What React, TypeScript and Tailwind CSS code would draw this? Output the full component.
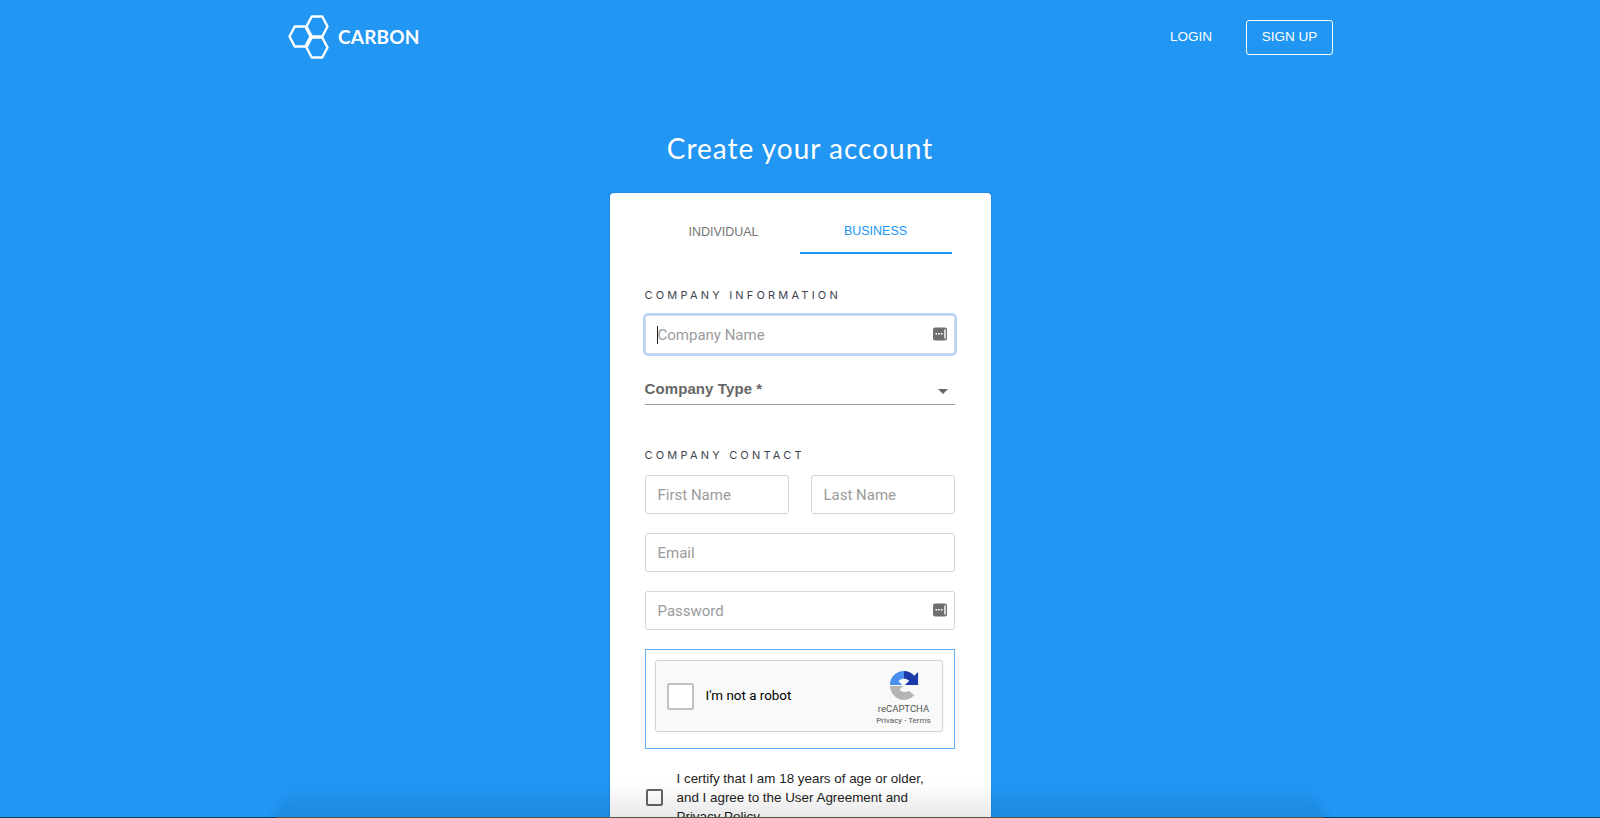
import React from "react";

function KeyIcon() {
  return (
    <svg width="14" height="14" viewBox="0 0 14 14" className="mb-[2px] shrink-0">
      <rect x="0" y="0.5" width="14" height="13" rx="2" fill="#6f6f6f" />
      <rect x="11" y="2.5" width="2" height="9" fill="#d8d8d8" />
      <rect x="2.5" y="6" width="1.6" height="1.6" fill="#fff" />
      <rect x="5.2" y="6" width="1.6" height="1.6" fill="#fff" />
      <rect x="7.9" y="6" width="1.6" height="1.6" fill="#fff" />
    </svg>
  );
}

function Field({ placeholder, keyIcon, className }: { placeholder: string; keyIcon?: boolean; className?: string }) {
  return (
    <div className={"flex h-[39px] items-center rounded-[3px] border border-[#d3d6da] bg-white pl-[12px] pr-[7px] " + (className ?? "")}>
      <input
        readOnly
        placeholder={placeholder}
        className="mt-px min-w-0 flex-1 bg-transparent font-['Roboto',sans-serif] text-[15px] text-[#333] outline-none placeholder:text-[#9b9b9b]"
      />
      {keyIcon && <KeyIcon />}
    </div>
  );
}

function SectionLabel({ children }: { children: React.ReactNode }) {
  return (
    <div className="font-['Inter',sans-serif] text-[11px] leading-[14px] tracking-[3.2px] text-[#3d4450]">
      {children}
    </div>
  );
}

function RecaptchaLogo() {
  return (
    <svg width="30" height="32" viewBox="0 0 32 32">
      <path d="M1 17 H15 L11 21 A7.5 7.5 0 0 0 21 22 L27 27 A15 15 0 0 1 1 17 Z" fill="#b4b4b4" />
      <path d="M1 16 A15 15 0 0 1 16 1 V9 A8 8 0 0 0 10 12 L14 16 H1 Z" fill="#4a8ff0" />
      <path d="M16 1 A15 15 0 0 1 27 6 L31 2 V16 H17 L21.5 11.5 A8 8 0 0 0 16 9 Z" fill="#1c3aa9" />
    </svg>
  );
}

function CarbonLogo() {
  return (
    <svg width="41" height="44" viewBox="-1.5 -1.5 41 44" fill="none" stroke="#fff" strokeWidth="2.4" strokeLinejoin="round">
      <path d="M0 20 L5.25 10 H15.75 L21 20 L15.75 30 H5.25 Z" />
      <path d="M17 10 L22.25 0 H32.75 L38 10 L32.75 20 H22.25 Z" />
      <path d="M17 31 L22.25 21 H32.75 L38 31 L32.75 41 H22.25 Z" />
    </svg>
  );
}

export default function App() {
  return (
    <div className="relative h-[818px] overflow-hidden bg-[#2196f3] font-['Liberation_Sans',Arial,sans-serif]">
      <header className="flex h-[74px] items-center justify-between pl-[288px] pr-[267px]">
        <div className="flex items-center gap-[9px]">
          <CarbonLogo />
          <span className="font-['Lato',sans-serif] text-[19px] font-bold tracking-[0.2px] text-white">CARBON</span>
        </div>
        <div className="flex items-center gap-[34px]">
          <span className="text-[13.5px] text-white">LOGIN</span>
          <span className="flex h-[35px] w-[87px] items-center justify-center rounded-[3px] border border-white text-[13.5px] text-white">
            SIGN UP
          </span>
        </div>
      </header>

      <h1 className="mt-[50px] text-center font-['Lato',sans-serif] text-[28px] font-normal leading-[48px] tracking-[1px] text-white">
        Create your account
      </h1>

      <main className="mx-auto mt-[21px] w-[381px] rounded-[4px] bg-white pl-[35px] pr-[36px] pt-[15px] shadow-[0_0_2px_rgba(13,71,161,0.5)]">
        <div className="mx-[3px] flex h-[46px] text-[12.5px]">
          <div className="flex flex-1 items-center justify-center pt-[3px] text-[#757575]">INDIVIDUAL</div>
          <div className="flex flex-1 items-center justify-center border-b-2 border-[#2196f3] pt-[3px] text-[#2196f3]">BUSINESS</div>
        </div>

        <div className="mt-[34px]">
          <SectionLabel>COMPANY INFORMATION</SectionLabel>
        </div>
        <div className="relative mt-[13px]">
          <Field
            placeholder="Company Name"
            keyIcon
            className="border-[#64a8f5] shadow-[0_0_0_2px_#b5d7fd]"
          />
          <div className="absolute left-[12px] top-[11px] h-[18px] w-px bg-[#222]" />
        </div>

        <div className="mt-[21px] flex h-[30px] items-center justify-between border-b border-[#9e9e9e] pr-[7px]">
          <span className="text-[15px] font-bold tracking-[0.1px] text-[#666]">Company Type *</span>
          <span className="mt-[3px] h-0 w-0 border-x-[5px] border-t-[5px] border-x-transparent border-t-[#666]" />
        </div>

        <div className="mt-[43px]">
          <SectionLabel>COMPANY CONTACT</SectionLabel>
        </div>
        <div className="mt-[13px] grid grid-cols-2 gap-[22px]">
          <Field placeholder="First Name" />
          <Field placeholder="Last Name" />
        </div>
        <Field placeholder="Email" className="mt-[19px]" />
        <Field placeholder="Password" keyIcon className="mt-[19px]" />

        <div className="mt-[19px] h-[100px] border border-[#64b0f6] pl-[9px] pr-[11px] pt-[10px]">
          <div className="flex h-[72px] items-center rounded-[3px] border border-[#d3d3d3] bg-[#f9f9f9] pl-[11px] pr-[10px] shadow-[0_0_3px_rgba(0,0,0,0.08)]">
            <div className="h-[27px] w-[27px] rounded-[2px] border-2 border-[#c1c1c1] bg-white" />
            <span className="ml-[12px] flex-1 font-['Roboto',sans-serif] text-[13.4px] text-black">I'm not a robot</span>
            <div className="flex w-[56px] flex-col items-center pt-[3px] font-['Roboto',sans-serif] text-[#555]">
              <RecaptchaLogo />
              <span className="mt-[2px] text-[9.5px] leading-[12px]">reCAPTCHA</span>
              <span className="text-[8px] leading-[11px]">Privacy - Terms</span>
            </div>
          </div>
        </div>

        <div className="mt-[19px] flex items-center pb-[40px]">
          <span className="ml-px h-[17px] w-[17px] shrink-0 rounded-[2px] border-2 border-[#666] bg-white" />
          <p className="ml-[14px] mt-px w-[262px] text-[13.4px] leading-[19px] text-[#222]">
            I certify that I am 18 years of age or older, and I agree to the User Agreement and Privacy Policy
          </p>
        </div>
      </main>

      <div className="pointer-events-none absolute bottom-[-6px] left-[274px] h-[40px] w-[1052px] rounded-t-[40px] bg-[linear-gradient(to_bottom,rgba(0,0,0,0),rgba(0,0,0,0.11))] blur-[4px]" />
      <div className="absolute bottom-0 left-0 h-px w-full bg-[#1a3a55]" />
      <div className="absolute bottom-0 left-[276px] h-px w-[1048px] bg-[#5a5046]" />
    </div>
  );
}
